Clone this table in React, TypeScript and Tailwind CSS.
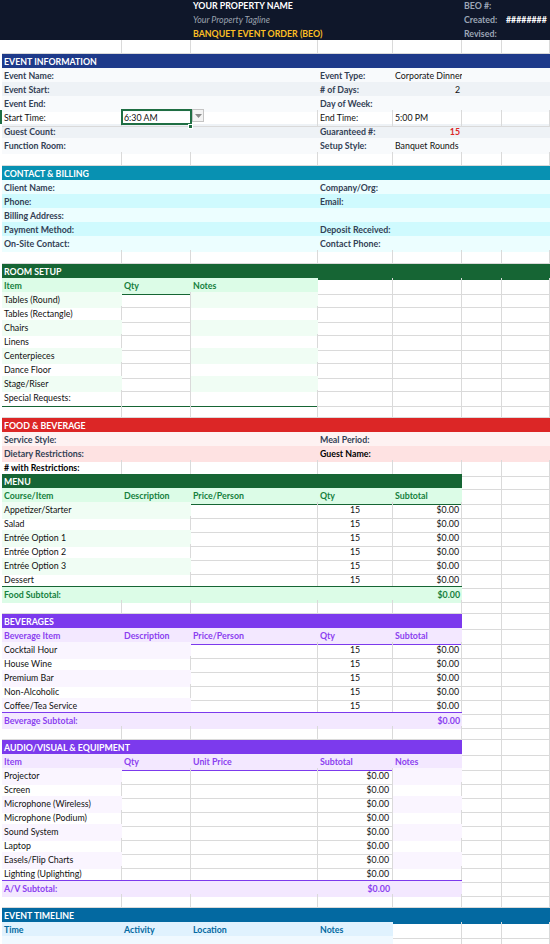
import React from 'react';

type Spec = { s?: number; bg?: string; t?: React.ReactNode; c?: string };

const SPAN: Record<number, string> = {
  1: 'col-span-1',
  2: 'col-span-2',
  3: 'col-span-3',
  4: 'col-span-4',
  5: 'col-span-5',
  7: 'col-span-7',
};

const GRID = 'grid h-[14px] grid-cols-[120px_69px_127px_75px_69px_40px_1fr]';
const GL = 'border-r border-b border-[#dadada]';
const NONE = 'bg-transparent';

const Row: React.FC<{ cells: Spec[]; className?: string }> = ({ cells, className = '' }) => (
  <div className={`${GRID} ${className}`}>
    {cells.map((x, i) => (
      <div
        key={i}
        className={`${SPAN[x.s ?? 1]} ${x.bg ?? GL} whitespace-nowrap px-[2px] leading-[16px] ${x.c ?? ''}`}
      >
        {x.t}
      </div>
    ))}
  </div>
);

const blank = (n: number): Spec[] => Array.from({ length: n }, () => ({}));

const Empty = () => <Row cells={blank(7)} />;

const Title: React.FC<{ text: string; bg: string; span?: number }> = ({ text, bg, span = 7 }) => (
  <Row cells={[{ s: span, bg, t: text, c: 'font-bold text-white' }, ...blank(7 - span)]} />
);

const LBL = 'font-bold text-[#334155]';

// event information colours
const EI1 = 'bg-[#f8fafc]';
const EI2 = 'bg-[#eef2f6]';

const InfoRow: React.FC<{ bg: string; left: string; right: string; value?: string; vc?: string; className?: string }> = ({
  bg,
  left,
  right,
  value,
  vc = '',
  className,
}) => (
  <Row
    className={className}
    cells={[
      { s: 3, bg, t: left, c: LBL },
      { bg, t: right, c: LBL },
      { bg, t: value, c: vc },
      { s: 2, bg },
    ]}
  />
);

const SelectedCell = () => (
  <>
    6:30 AM
    <span className="pointer-events-none absolute -left-[1px] -top-[1px] h-[16px] w-[71px] border-2 border-[#1f6e43]" />
    <span className="absolute -bottom-[3px] -right-[3px] h-[5px] w-[5px] border border-white bg-[#1f6e43]" />
    <span className="absolute -top-[1px] left-[70px] flex h-[13px] w-[12px] items-center justify-center border border-[#c4c4c4] bg-[#f3f3f3]">
      <svg width="7" height="4" viewBox="0 0 7 4">
        <path d="M0 0h7L3.5 4z" fill="#8a8a8a" />
      </svg>
    </span>
  </>
);

const GREEN = 'bg-[#166534]';
const GREEN_HEAD = 'bg-[#dcfce7]';
const GREEN_ROW = 'bg-[#f0fdf4]';
const PURPLE = 'bg-[#7c3aed]';
const PURPLE_HEAD = 'bg-[#f3e8ff]';
const PURPLE_ROW = 'bg-[#faf5ff]';

const menuItems = ['Appetizer/Starter', 'Salad', 'Entrée Option 1', 'Entrée Option 2', 'Entrée Option 3', 'Dessert'];
const bevItems = ['Cocktail Hour', 'House Wine', 'Premium Bar', 'Non-Alcoholic', 'Coffee/Tea Service'];
const roomItems = ['Tables (Round)', 'Tables (Rectangle)', 'Chairs', 'Linens', 'Centerpieces', 'Dance Floor', 'Stage/Riser'];
const avItems = [
  'Projector',
  'Screen',
  'Microphone (Wireless)',
  'Microphone (Podium)',
  'Sound System',
  'Laptop',
  'Easels/Flip Charts',
  'Lighting (Uplighting)',
];

export default function App() {
  return (
    <div className="h-[944px] w-[550px] overflow-hidden bg-white font-['Lato',sans-serif] text-[8.8px] text-[#111]">
      {/* property header */}
      <div className="h-[40px] overflow-hidden bg-[#0f172a]">
        <div className="-mt-[2px] pl-[2px]">
          <Row
            cells={[
              { s: 2, bg: NONE },
              { s: 3, bg: NONE, t: 'YOUR PROPERTY NAME', c: 'font-bold text-white' },
              { bg: NONE, t: 'BEO #:', c: 'font-bold text-[#9ca6b6]' },
              { bg: NONE },
            ]}
          />
          <Row
            cells={[
              { s: 2, bg: NONE },
              { s: 3, bg: NONE, t: 'Your Property Tagline', c: 'italic text-[#9ca3af]' },
              { bg: NONE, t: 'Created:', c: 'font-bold text-[#9ca6b6]' },
              { bg: NONE, t: '########', c: 'font-bold text-white pl-[4px]' },
            ]}
          />
          <Row
            cells={[
              { s: 2, bg: NONE },
              { s: 3, bg: NONE, t: 'BANQUET EVENT ORDER (BEO)', c: 'font-bold text-[#fbbf24]' },
              { bg: NONE, t: 'Revised:', c: 'font-bold text-[#9ca6b6]' },
              { bg: NONE },
            ]}
          />
        </div>
      </div>

      <div className="pl-[2px]">
        <Empty />

        {/* event information */}
        <Title text="EVENT INFORMATION" bg="bg-[#1e3a8a]" />
        <InfoRow bg={EI1} left="Event Name:" right="Event Type:" value="Corporate Dinner" />
        <InfoRow bg={EI2} left="Event Start:" right="# of Days:" value="2" vc="text-right" />
        <InfoRow bg={EI1} left="Event End:" right="Day of Week:" />
        <div className="relative">
          <span className="absolute -left-[2px] top-0 h-[14px] w-[2px] bg-[#1f6e43]" />
          <Row
            cells={[
              { t: 'Start Time:' },
              { t: <SelectedCell />, c: 'relative' },
              {},
              { t: 'End Time:' },
              { t: '5:00 PM' },
              {},
              {},
            ]}
          />
        </div>
        <InfoRow bg={EI2} left="Guest Count:" right="Guaranteed #:" value="15" vc="text-right font-bold text-[#dc2626]" />
        <InfoRow
          bg={EI1}
          left="Function Room:"
          right="Setup Style:"
          value="Banquet Rounds"
          className="border-b border-[#1e3a8a]"
        />
        <Empty />

        {/* contact & billing */}
        <Title text="CONTACT & BILLING" bg="bg-[#0891b2]" />
        {[
          ['Client Name:', 'Company/Org:'],
          ['Phone:', 'Email:'],
          ['Billing Address:', ''],
          ['Payment Method:', 'Deposit Received:'],
          ['On-Site Contact:', 'Contact Phone:'],
        ].map(([a, b], i) => (
          <Row
            key={a}
            className={i === 4 ? 'border-b border-[#0891b2]' : ''}
            cells={[
              { s: 3, bg: i % 2 ? 'bg-[#cffafe]' : 'bg-[#ecfeff]', t: a, c: LBL },
              { s: 4, bg: i % 2 ? 'bg-[#cffafe]' : 'bg-[#ecfeff]', t: b, c: LBL },
            ]}
          />
        ))}
        <Empty />

        {/* room setup */}
        <Title text="ROOM SETUP" bg={GREEN} />
        <Row
          cells={[
            { bg: `${GREEN_HEAD} border-b border-[#166534]`, t: 'Item', c: 'font-bold text-[#15803d]' },
            { bg: `${GREEN_HEAD} border-b border-[#166534]`, t: 'Qty', c: 'font-bold text-[#15803d]' },
            { bg: `${GREEN_HEAD} border-b border-[#166534]`, t: 'Notes', c: 'font-bold text-[#15803d]' },
            ...blank(4),
          ]}
        />
        {roomItems.map((item, i) => (
          <Row
            key={item}
            cells={
              i % 2 === 0
                ? [{ bg: GREEN_ROW, t: item }, {}, { bg: GREEN_ROW }, ...blank(4)]
                : [{ t: item }, ...blank(6)]
            }
          />
        ))}
        <Row
          cells={[
            { t: 'Special Requests:', c: 'border-b-[#166534]!' },
            { c: 'border-b-[#166534]!' },
            { c: 'border-b-[#166534]!' },
            ...blank(4),
          ]}
        />
        <Empty />

        {/* food & beverage */}
        <Title text="FOOD & BEVERAGE" bg="bg-[#dc2626]" />
        <Row
          cells={[
            { s: 3, bg: 'bg-[#fef2f2]', t: 'Service Style:', c: LBL },
            { s: 4, bg: 'bg-[#fef2f2]', t: 'Meal Period:', c: LBL },
          ]}
        />
        <Row
          cells={[
            { s: 3, bg: 'bg-[#fee2e2]', t: 'Dietary Restrictions:', c: LBL },
            { s: 4, bg: 'bg-[#fee2e2]', t: 'Guest Name:', c: 'font-bold text-black' },
          ]}
        />
        <Row cells={[{ t: '# with Restrictions:', c: 'font-bold text-black' }, ...blank(6)]} />

        {/* menu */}
        <Title text="MENU" bg={GREEN} span={5} />
        <Row
          cells={[
            ...['Course/Item', 'Description', 'Price/Person', 'Qty', 'Subtotal'].map((h) => ({
              bg: `${GREEN_HEAD} border-b border-[#166534]`,
              t: h,
              c: 'font-bold text-[#15803d]',
            })),
            ...blank(2),
          ]}
        />
        {menuItems.map((item, i) => (
          <Row
            key={item}
            cells={[
              i % 2 === 0 ? { s: 2, bg: GREEN_ROW, t: item } : { s: 2, t: item },
              {},
              { t: '15', c: 'text-center' },
              { t: '$0.00', c: 'text-right' },
              ...blank(2),
            ]}
          />
        ))}
        <Row
          cells={[
            { s: 4, bg: `${GREEN_HEAD} border-t border-[#166534]`, t: 'Food Subtotal:', c: 'font-bold text-[#15803d]' },
            { bg: `${GREEN_HEAD} border-t border-[#166534]`, t: '$0.00', c: 'text-right font-bold text-[#15803d]' },
            ...blank(2),
          ]}
        />
        <Empty />

        {/* beverages */}
        <Title text="BEVERAGES" bg={PURPLE} span={5} />
        <Row
          cells={[
            ...['Beverage Item', 'Description', 'Price/Person', 'Qty', 'Subtotal'].map((h) => ({
              bg: `${PURPLE_HEAD} border-b border-[#7c3aed]`,
              t: h,
              c: 'font-bold text-[#8b3ff0]',
            })),
            ...blank(2),
          ]}
        />
        {bevItems.map((item, i) => (
          <Row
            key={item}
            cells={[
              i % 2 === 0 ? { s: 2, bg: PURPLE_ROW, t: item } : { s: 2, t: item },
              {},
              { t: '15', c: 'text-center' },
              { t: '$0.00', c: 'text-right' },
              ...blank(2),
            ]}
          />
        ))}
        <Row
          cells={[
            { s: 4, bg: `${PURPLE_HEAD} border-t border-[#7c3aed]`, t: 'Beverage Subtotal:', c: 'font-bold text-[#8b3ff0]' },
            { bg: `${PURPLE_HEAD} border-t border-[#7c3aed]`, t: '$0.00', c: 'text-right font-bold text-[#8b3ff0]' },
            ...blank(2),
          ]}
        />
        <Empty />

        {/* audio / visual */}
        <Title text="AUDIO/VISUAL & EQUIPMENT" bg={PURPLE} span={5} />
        <Row
          cells={[
            ...['Item', 'Qty', 'Unit Price', 'Subtotal', 'Notes'].map((h) => ({
              bg: `${PURPLE_HEAD} border-b border-[#7c3aed]`,
              t: h,
              c: 'font-bold text-[#8b3ff0]',
            })),
            ...blank(2),
          ]}
        />
        {avItems.map((item, i) => (
          <Row
            key={item}
            cells={[
              i % 2 === 0 ? { bg: PURPLE_ROW, t: item } : { t: item },
              {},
              {},
              { t: '$0.00', c: 'text-right pr-[3px]' },
              i % 2 === 0 ? { bg: PURPLE_ROW } : {},
              ...blank(2),
            ]}
          />
        ))}
        <Row
          cells={[
            { s: 3, bg: `${PURPLE_HEAD} border-t border-[#7c3aed]`, t: 'A/V Subtotal:', c: 'font-bold text-[#8b3ff0]' },
            { bg: `${PURPLE_HEAD} border-t border-[#7c3aed]`, t: '$0.00', c: 'text-right pr-[3px] font-bold text-[#8b3ff0]' },
            { bg: `${PURPLE_HEAD} border-t border-[#7c3aed]` },
            ...blank(2),
          ]}
        />
        <Empty />

        {/* event timeline */}
        <Title text="EVENT TIMELINE" bg="bg-[#0369a1]" />
        <Row
          cells={[
            ...['Time', 'Activity', 'Location', 'Notes'].map((h) => ({
              bg: 'bg-[#e0f2fe] border-b border-[#0369a1]',
              t: h,
              c: 'font-bold text-[#0369a1]',
            })),
            ...blank(3),
          ]}
        />
        <Row cells={[{ s: 4, bg: 'bg-[#f0f9ff]' }, ...blank(3)]} />
      </div>
    </div>
  );
}
